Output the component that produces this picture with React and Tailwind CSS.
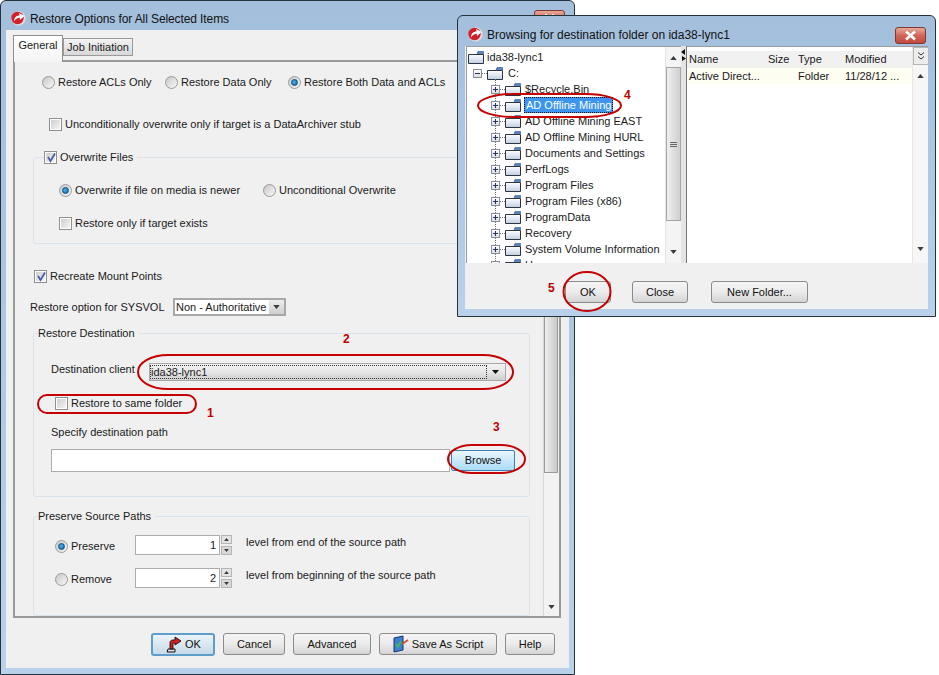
import React from "react";

const btn =
    "flex items-center justify-center h-[22px] rounded-[3px] border border-[#8b8b8b] bg-linear-to-b from-[#f5f5f5] via-[#ebebeb] to-[#d4d4d4] text-[#111]";

function Logo() {
    return (
        <svg width="15" height="15" viewBox="0 0 15 15" className="shrink-0">
            <circle cx="7.5" cy="7.5" r="7.2" fill="#dcdcdc" />
            <circle cx="6.5" cy="7" r="6.2" fill="#d2202a" />
            <path d="M3 10.5 C3 6.5 5.5 4.5 8.5 4.5 L8 2 L13.5 5 L9 9 L8.7 6.8 C6.5 6.8 4.5 8 3 10.5Z" fill="#fff" />
        </svg>
    );
}

function CloseButton({ className }) {
    return (
        <div
            className={`absolute flex items-center justify-center rounded-[3px] border border-[#7a3a35] bg-linear-to-b from-[#e9a99a] via-[#d2665a] to-[#c4473b] ${className}`}
        >
            <svg width="13" height="11" viewBox="0 0 13 11">
                <path d="M2 1.5 L11 9.5 M11 1.5 L2 9.5" stroke="#fff" strokeWidth="2.6" />
            </svg>
        </div>
    );
}

function Radio({ checked }) {
    return (
        <span className="flex shrink-0 items-center justify-center w-[13px] h-[13px] rounded-full border border-[#9a9a9a] bg-linear-to-br from-[#c8c8c8] to-[#f8f8f8]">
            {checked && (
                <span className="block w-[7px] h-[7px] rounded-full bg-[radial-gradient(circle_at_40%_40%,#4fb4ea,#0d5f9e)] border border-[#0c4f82]" />
            )}
        </span>
    );
}

function Check({ checked }) {
    return (
        <span className="relative flex shrink-0 items-center justify-center w-[13px] h-[13px] border border-[#8f8f8f] bg-white">
            <span className="block w-[9px] h-[9px] bg-linear-to-br from-[#cfcfcf] to-[#f4f4f4]" />
            {checked && (
                <svg className="absolute left-[1px] top-[0px]" width="11" height="11" viewBox="0 0 11 11">
                    <path d="M2 5 L4.5 9 L9 1.5" stroke="#4a5ea8" strokeWidth="1.8" fill="none" />
                </svg>
            )}
        </span>
    );
}

function RadioLabel({ checked, className = "", children }) {
    return (
        <div className={`flex items-center gap-[3px] ${className}`}>
            <Radio checked={checked} />
            <span>{children}</span>
        </div>
    );
}

function CheckLabel({ checked, className = "", children }) {
    return (
        <div className={`flex items-center gap-[3px] ${className}`}>
            <Check checked={checked} />
            <span>{children}</span>
        </div>
    );
}

function Arrow({ up, className = "" }) {
    return (
        <svg className={className} width="8" height="5" viewBox="0 0 8 5">
            <path d={up ? "M4 0 L8 5 L0 5Z" : "M0 0 L8 0 L4 5Z"} fill="#3c3c3c" />
        </svg>
    );
}

function Group({ title, titleClass = "", className = "", children }) {
    return (
        <div className={`relative ml-[18px] w-[497px] rounded-[3px] border border-[#dbe3ea] ${className}`}>
            <div className={`absolute left-[4px] -top-[8px] bg-[#f0f0f0] pr-[4px] leading-[14px] ${titleClass}`}>{title}</div>
            {children}
        </div>
    );
}

function Spinner({ value }) {
    return (
        <div className="flex w-[97px] shrink-0">
            <div className="flex items-center justify-end w-[85px] h-[20px] border border-[#acacac] bg-white pr-[3px]">{value}</div>
            <div className="flex flex-col justify-between ml-[1px] w-[11px] h-[20px]">
                <div className="flex items-center justify-center h-[9px] border border-[#b5b5b5] bg-[#e4e4e4]">
                    <Arrow up className="w-[5px] h-[3px]" />
                </div>
                <div className="flex items-center justify-center h-[9px] border border-[#b5b5b5] bg-[#d8d8d8]">
                    <Arrow className="w-[5px] h-[3px]" />
                </div>
            </div>
        </div>
    );
}

function MainWindow() {
    return (
        <div className="absolute left-0 top-0 w-[575px] h-[675px] flex flex-col rounded-t-[6px] border border-[#24323c] bg-linear-to-b from-[#a3bfdc] to-[#b9d1ea]">
            <CloseButton className="left-[533px] top-[9px] w-[31px] h-[17px]" />
            <div className="flex items-center h-[29px] pt-[6px] pl-[10px] gap-[4px] text-[12px] text-[#111]">
                <Logo />
                <span className="tracking-[-0.1px]">Restore Options for All Selected Items</span>
            </div>
            <div className="flex flex-col flex-1 mx-[5px] mb-[6px] bg-[#f0f0f0] pt-[5px]">
                <div className="flex items-start h-[25px] pl-[7px] shrink-0">
                    <div className="relative z-10 flex items-center justify-center w-[50px] h-[27px] pb-[8px] border border-b-0 border-[#8f8f8f] bg-linear-to-b from-white to-[#f4f4f4]">
                        General
                    </div>
                    <div className="flex items-center justify-center mt-[3px] w-[70px] h-[18px] border border-[#9a9a9a] bg-linear-to-b from-[#f3f3f3] to-[#d8d8d8]">
                        Job Initiation
                    </div>
                </div>

                <div className="flex h-[558px] ml-[7px] mr-[8px] border-2 border-[#9a9a9a] shrink-0">
                    <div className="flex-1 flex flex-col">
                        <div className="flex items-center h-[20px] mt-[10px] pl-[27px]">
                            <RadioLabel className="w-[123px]">Restore ACLs Only</RadioLabel>
                            <RadioLabel className="w-[123px]">Restore Data Only</RadioLabel>
                            <RadioLabel checked>Restore Both Data and ACLs</RadioLabel>
                        </div>
                        <CheckLabel className="h-[20px] mt-[22px] pl-[34px]">
                            Unconditionally overwrite only if target is a DataArchiver stub
                        </CheckLabel>

                        <Group
                            className="h-[87px] mt-[23px]"
                            titleClass="!left-[10px] flex items-center"
                            title={<CheckLabel checked>Overwrite Files</CheckLabel>}
                        >
                            <div className="flex items-center h-[20px] mt-[22px] pl-[25px]">
                                <RadioLabel checked className="w-[204px]">Overwrite if file on media is newer</RadioLabel>
                                <RadioLabel>Unconditional Overwrite</RadioLabel>
                            </div>
                            <CheckLabel className="h-[20px] mt-[13px] pl-[25px]">Restore only if target exists</CheckLabel>
                        </Group>

                        <CheckLabel checked className="h-[20px] mt-[22px] pl-[19px]">Recreate Mount Points</CheckLabel>

                        <div className="flex items-center h-[18px] mt-[12px] pl-[15px]">
                            <span className="w-[143px]">Restore option for SYSVOL</span>
                            <div className="flex w-[113px] h-[18px] border-2 border-[#a8a8a8] bg-white">
                                <span className="flex-1 pl-[1px] leading-[14px] whitespace-nowrap">Non - Authoritative</span>
                                <div className="flex items-center justify-center w-[15px] bg-linear-to-b from-[#eeeeee] to-[#cfcfcf]">
                                    <Arrow className="w-[7px] h-[4px]" />
                                </div>
                            </div>
                        </div>

                        <Group className="h-[164px] mt-[17px]" title="Restore Destination">
                            <div className="flex items-center h-[18px] mt-[29px] pl-[17px]">
                                <span className="w-[98px] -mt-[6px]">Destination client</span>
                                <div className="flex items-center w-[357px] h-[18px] border border-[#a8a8a8] bg-linear-to-b from-[#f3f3f3] via-[#e6e6e6] to-[#cfcfcf] pr-[1px]">
                                    <div className="flex-1 h-[14px] border border-dotted border-[#333] leading-[12px]">ida38-lync1</div>
                                    <div className="flex items-center justify-center w-[17px]">
                                        <svg width="7" height="4" viewBox="0 0 7 4">
                                            <path d="M0 0 L7 0 L3.5 4Z" fill="#111" />
                                        </svg>
                                    </div>
                                </div>
                            </div>
                            <CheckLabel className="h-[16px] mt-[14px] pl-[21px]">Restore to same folder</CheckLabel>
                            <div className="h-[16px] mt-[13px] pl-[17px] leading-[16px]">Specify destination path</div>
                            <div className="flex items-start mt-[9px] ml-[17px]">
                                <div className="w-[399px] h-[23px] border border-[#acacac] bg-white" />
                                <div className="flex items-center justify-center ml-[1px] w-[64px] h-[21px] mt-[1px] rounded-[2px] border border-[#3c7fb1] bg-linear-to-b from-[#eaf6fd] to-[#a9dbf6] text-[#111]">
                                    Browse
                                </div>
                            </div>
                        </Group>

                        <Group className="h-[100px] mt-[19px]" title="Preserve Source Paths">
                            <div className="flex items-start mt-[18px] pl-[21px]">
                                <div className="flex items-center h-[20px] w-[80px]">
                                    <RadioLabel checked className="mt-[2px]">Preserve</RadioLabel>
                                </div>
                                <Spinner value="1" />
                                <span className="ml-[14px] mt-[-1px] leading-[16px]">level from end of the source path</span>
                            </div>
                            <div className="flex items-start mt-[13px] pl-[21px]">
                                <div className="flex items-center h-[20px] w-[80px]">
                                    <RadioLabel className="mt-[2px]">Remove</RadioLabel>
                                </div>
                                <Spinner value="2" />
                                <span className="ml-[14px] mt-[-1px] leading-[16px]">level from beginning of the source path</span>
                            </div>
                        </Group>
                    </div>

                    {/* scrollbar, the top of it is under the browse window */}
                    <div className="flex flex-col w-[15px] mr-[1px] border-l border-[#d8d8d8] bg-[#f2f2f2]">
                        <div className="mt-[16px] h-[395px] border border-[#9b9b9b] bg-linear-to-r from-[#eeeeee] to-[#c9c9c9]" />
                        <div className="flex-1 flex items-end justify-center pb-[7px]">
                            <Arrow className="w-[7px] h-[4px]" />
                        </div>
                    </div>
                </div>

                <div className="flex items-start pt-[15px] pl-[145px] gap-[8px]">
                    <div className="flex items-center justify-center gap-[3px] w-[64px] h-[23px] rounded-[3px] border-2 border-[#5f9ecb] bg-linear-to-b from-[#eaf3f9] to-[#c8dbe8] text-[#111]">
                        <svg width="17" height="17" viewBox="0 0 17 17">
                            <path d="M2 16 L3 13 L10 13 L10 16Z" fill="#dddddd" stroke="#111" />
                            <path d="M5 13 L5 7 C5 4 7 4 10 4 L10 1 L16 5 L10 9 L10 7 C8.5 7 8 7 8 8.5 L8 13Z" fill="#d32020" stroke="#111" strokeWidth="0.9" />
                        </svg>
                        OK
                    </div>
                    <div className={`${btn} w-[62px]`}>Cancel</div>
                    <div className={`${btn} w-[78px]`}>Advanced</div>
                    <div className={`${btn} w-[118px] gap-[3px]`}>
                        <svg width="16" height="18" viewBox="0 0 16 18">
                            <path d="M1 3 L10 1 L10 15 L1 17Z" fill="#3f7fd0" stroke="#16366e" />
                            <path d="M3 9 L5 12 L8 6" stroke="#43c14a" strokeWidth="1.6" fill="none" />
                            <path d="M9 9 L15 5" stroke="#d4552c" strokeWidth="2" />
                        </svg>
                        Save As Script
                    </div>
                    <div className={`${btn} w-[50px]`}>Help</div>
                </div>
            </div>
        </div>
    );
}

function Folder({ id }) {
    return (
        <svg width="16" height="13" viewBox="0 0 16 13" className="shrink-0">
            <defs>
                <linearGradient id={id} x1="0" y1="0" x2="0" y2="1">
                    <stop offset="0" stopColor="#ffffff" />
                    <stop offset="1" stopColor="#bfcfe2" />
                </linearGradient>
            </defs>
            <path d="M9 2.5 L10 0.5 L15.5 0.5 L15.5 3Z" fill="#5b7fb8" stroke="#5b7fb8" />
            <path d="M0.5 3.5 L15.5 3.5 L15.5 12.5 L0.5 12.5Z" fill={`url(#${id})`} stroke="#2c3440" />
        </svg>
    );
}

function TreeBox({ minus }) {
    return (
        <span className="relative z-10 flex shrink-0 items-center justify-center w-[9px] h-[9px] border border-[#8a8f9c] bg-linear-to-b from-white to-[#dcdcdc]">
            <span className="absolute w-[5px] h-[1px] bg-[#25306a]" />
            {!minus && <span className="absolute w-[1px] h-[5px] bg-[#25306a]" />}
        </span>
    );
}

const folders = [
    "$Recycle.Bin",
    "AD Offline Mining",
    "AD Offline Mining EAST",
    "AD Offline Mining HURL",
    "Documents and Settings",
    "PerfLogs",
    "Program Files",
    "Program Files (x86)",
    "ProgramData",
    "Recovery",
    "System Volume Information",
    "Users",
];

function BrowseWindow() {
    return (
        <div className="absolute left-[457px] top-[15px] w-[479px] h-[302px] flex flex-col rounded-t-[6px] border border-[#24323c] bg-linear-to-b from-[#a3bfdc] to-[#b9d1ea]">
            <CloseButton className="left-[437px] top-[11px] w-[31px] h-[17px]" />
            <div className="flex items-center h-[30px] pt-[7px] pl-[10px] gap-[4px] text-[12px] text-[#111]">
                <Logo />
                <span>Browsing for destination folder on ida38-lync1</span>
            </div>
            <div className="flex flex-col flex-1 mx-[7px] mb-[7px] bg-[#f0f0f0]">
                <div className="flex h-[217px] shrink-0">
                    <div className="relative flex ml-[1px] w-[215px] bg-white border-t border-l border-[#9c9c9c] overflow-hidden">
                        <div className="flex-1 pt-[2px] overflow-hidden">
                            <div className="flex items-center h-[16px] pl-[1px] gap-[3px]">
                                <Folder id="f-root" />
                                ida38-lync1
                            </div>
                            <div className="flex items-center h-[16px] pl-[6px]">
                                <TreeBox minus />
                                <span className="w-[5px] border-t border-dotted border-[#777]" />
                                <Folder id="f-c" />
                                <span className="ml-[5px]">C:</span>
                            </div>
                            <div className="absolute left-[28px] top-[32px] h-[184px] border-l border-dotted border-[#777]" />
                            {folders.map((name, i) => (
                                <div key={name} className="flex items-center h-[16px] pl-[24px] whitespace-nowrap">
                                    <TreeBox />
                                    <span className="w-[5px] border-t border-dotted border-[#777]" />
                                    <Folder id={`f-${i}`} />
                                    {name === "AD Offline Mining" ? (
                                        <span className="ml-[3px] h-[16px] px-[1px] leading-[14px] bg-[#3d95f0] text-white border border-dotted border-[#111]">
                                            {name}
                                        </span>
                                    ) : (
                                        <span className="ml-[4px]">{name}</span>
                                    )}
                                </div>
                            ))}
                        </div>
                        <div className="flex flex-col items-center w-[16px] shrink-0 border-l border-[#e4e4e4] bg-[#f4f4f4]">
                            <Arrow up className="w-[7px] h-[4px] mt-[9px]" />
                            <div className="flex flex-col items-center justify-center gap-[1px] w-[15px] h-[154px] mt-[7px] border border-[#a5a5a5] bg-linear-to-r from-[#efefef] to-[#cfcfcf]">
                                <span className="w-[7px] h-[1px] bg-[#666]" />
                                <span className="w-[7px] h-[1px] bg-[#666]" />
                                <span className="w-[7px] h-[1px] bg-[#666]" />
                            </div>
                            <Arrow className="w-[7px] h-[4px] mt-[29px]" />
                        </div>
                    </div>

                    <div className="flex flex-col items-center w-[6px] shrink-0 bg-[#e4e4e4] border-r border-[#777]">
                        <svg className="mt-[3px]" width="5" height="12" viewBox="0 0 5 12">
                            <path d="M4 0 L0 3 L4 6Z M1 7 L5 9.5 L1 12Z" fill="#111" />
                        </svg>
                    </div>

                    <div className="flex flex-1 border-t border-[#9c9c9c] bg-white">
                        <div className="flex-1 pt-[4px]">
                            <div className="flex items-center h-[17px] bg-[#f1f1f1] pl-[2px]">
                                <span className="w-[79px]">Name</span>
                                <span className="w-[30px]">Size</span>
                                <span className="w-[47px]">Type</span>
                                <span>Modified</span>
                            </div>
                            <div className="flex items-center h-[16px] bg-[#fdfdf2] pl-[2px]">
                                <span className="w-[109px]">Active Direct...</span>
                                <span className="w-[47px]">Folder</span>
                                <span>11/28/12 ...</span>
                            </div>
                        </div>
                        <div className="flex flex-col items-center w-[16px] bg-[#f6f6f6] border-l border-[#e6e6e6]">
                            <div className="flex items-center justify-center w-[16px] h-[18px] border border-[#b5b5b5] bg-[#ececec]">
                                <svg width="8" height="8" viewBox="0 0 8 8">
                                    <path d="M1 0.5 L4 3 L7 0.5 M1 4.5 L4 7 L7 4.5" stroke="#333" fill="none" />
                                </svg>
                            </div>
                            <Arrow up className="w-[7px] h-[4px] mt-[9px]" />
                            <Arrow className="w-[7px] h-[4px] mt-[169px]" />
                        </div>
                    </div>
                </div>

                <div className="flex items-start pt-[18px] pl-[100px]">
                    <div className={`${btn} w-[46px] h-[21px]`}>OK</div>
                    <div className={`${btn} w-[56px] h-[21px] ml-[21px]`}>Close</div>
                    <div className={`${btn} w-[97px] h-[21px] ml-[23px]`}>New Folder...</div>
                </div>
            </div>
        </div>
    );
}

function Annotations() {
    const number = "absolute text-[12px] font-bold leading-[14px] text-[#c00000]";
    return (
        <>
            <svg className="absolute left-0 top-0 pointer-events-none" width="939" height="675" fill="none" stroke="#c40000" strokeWidth="2">
                <rect x="38" y="395" width="158" height="18" rx="9" ry="9" />
                <rect x="138" y="355" width="375" height="34" rx="30" ry="17" />
                <rect x="448" y="445" width="77" height="28" rx="24" ry="14" />
                <rect x="478" y="94" width="143" height="23" rx="36" ry="11.5" />
                <ellipse cx="587" cy="291.5" rx="23.5" ry="19.5" />
            </svg>
            <span className={`${number} left-[207px] top-[406px]`}>1</span>
            <span className={`${number} left-[343px] top-[332px]`}>2</span>
            <span className={`${number} left-[493px] top-[420px]`}>3</span>
            <span className={`${number} left-[624px] top-[88px]`}>4</span>
            <span className={`${number} left-[548px] top-[281px]`}>5</span>
        </>
    );
}

export default function App() {
    return (
        <div className="relative w-[939px] h-[675px] overflow-hidden bg-white font-['Liberation_Sans',sans-serif] text-[11px] text-[#1a1a1a]">
            <MainWindow />
            <BrowseWindow />
            <Annotations />
        </div>
    );
}
